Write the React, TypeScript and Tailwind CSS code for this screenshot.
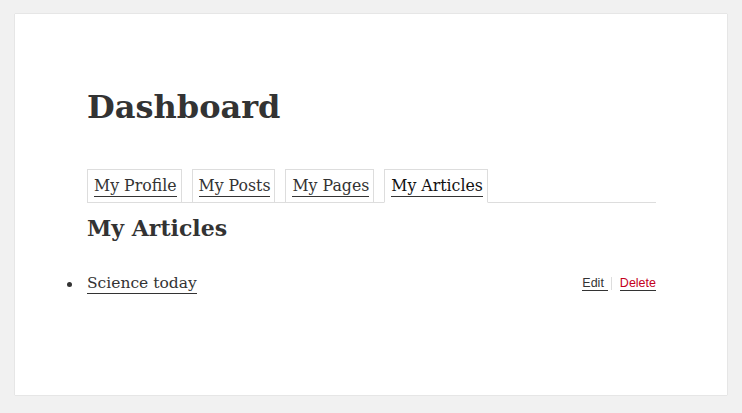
import React from 'react';

const serif = { fontFamily: '"DejaVu Serif", "Liberation Serif", serif' };

const tabs = ['My Profile', 'My Posts', 'My Pages', 'My Articles'];

export default function App() {
  const active = 'My Articles';

  return (
    <div className="min-h-[413px] bg-[#f1f1f1] pt-[14px] pb-[18px] px-[15px]">
      <div
        className="h-[381px] bg-white shadow-[0_0_1px_rgba(0,0,0,0.25)] pl-[72px] pr-[71px] pt-[73px]"
        style={serif}
      >
        {/* Page title */}
        <h1 className="text-[32px] leading-[40px] font-bold text-[#333]">Dashboard</h1>

        {/* Tabs */}
        <ul className="mt-[42px] flex gap-[10px] border-b border-[#ddd]">
          {tabs.map((tab) => {
            const isActive = tab === active;
            return (
              <li
                key={tab}
                className={`-mb-px border border-[#ddd] pl-[6px] pr-[4px] pt-[4px] pb-[4px] ${
                  isActive ? 'border-b-white bg-white' : ''
                }`}
              >
                <a
                  href="#"
                  className={`text-[15.75px] leading-[24px] pb-[1px] border-b border-[#333] ${
                    isActive ? 'text-[#111]' : 'text-[#333]'
                  }`}
                >
                  {tab}
                </a>
              </li>
            );
          })}
        </ul>

        {/* Section */}
        <h2 className="mt-[10px] text-[22px] leading-[30px] font-bold text-[#333]">My Articles</h2>

        <ul className="mt-[28px] text-[#333]">
          <li className="flex items-baseline justify-between">
            <span className="relative">
              <span className="absolute left-[-20px] top-[11px] h-[5px] w-[5px] rounded-full bg-[#333]" />
              <a href="#" className="text-[15.5px] leading-[24px] pb-[1px] border-b border-[#333]">
                Science today
              </a>
            </span>
            <span
              className="flex items-center text-[12.5px] leading-[14px] -translate-y-[1px]"
              style={{ fontFamily: '"Liberation Sans", Arial, sans-serif' }}
            >
              <a href="#" className="text-[#333] border-b border-[#333] pr-[4px]">
                Edit
              </a>
              <span className="ml-[3px] h-[13px] w-px bg-[#ddd]" />
              <a href="#" className="ml-[8px] text-[#c4001c] border-b border-[#333]">
                Delete
              </a>
            </span>
          </li>
        </ul>
      </div>
    </div>
  );
}
